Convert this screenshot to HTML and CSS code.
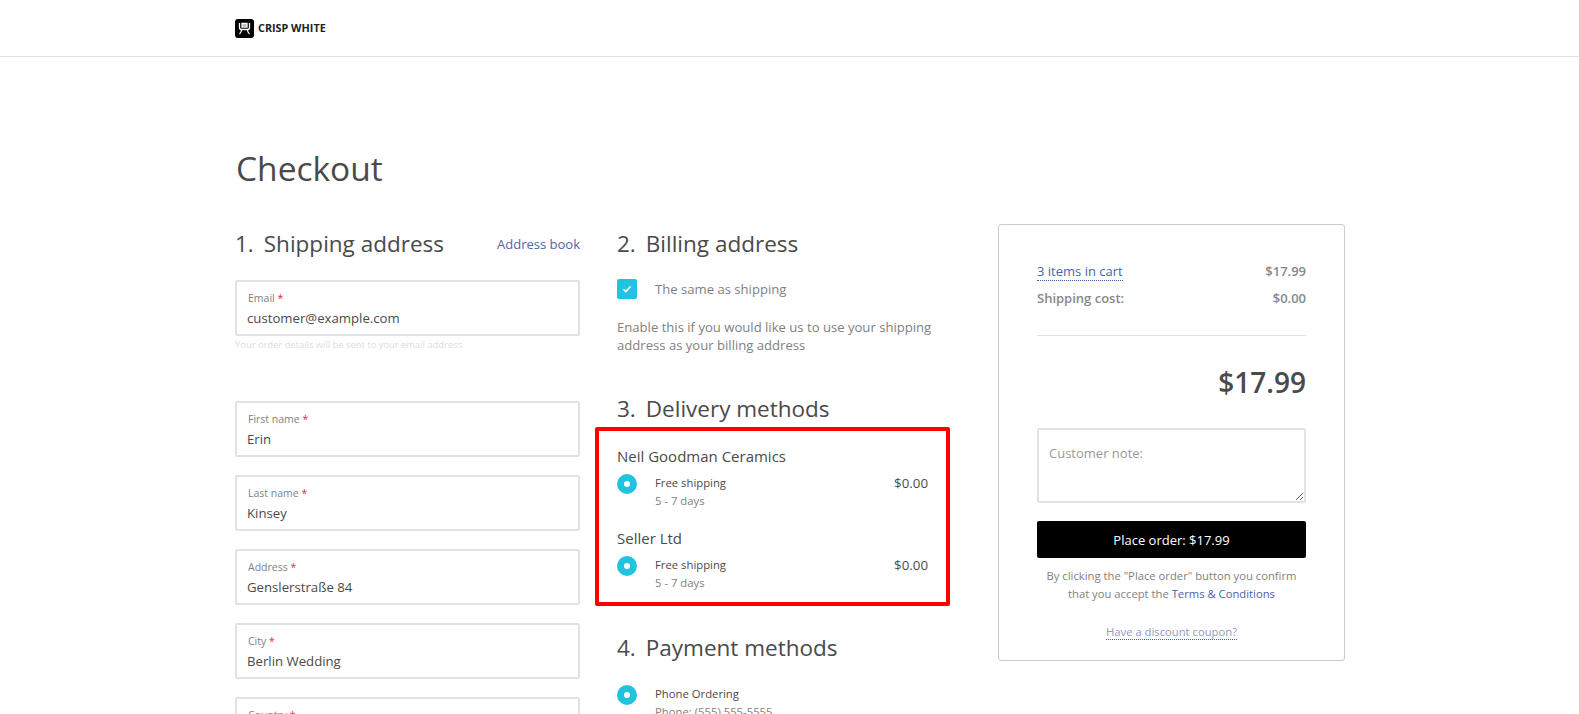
FILE: index.html
```html
<!DOCTYPE html>
<html lang="en">
<head>
  <meta charset="UTF-8">
  <title>Checkout</title>
  <link rel="stylesheet" href="styles.css">
</head>
<body>
  <header class="topbar">
    <a class="logo" href="#">
      <svg class="logo-mark" width="19" height="19" viewBox="0 0 19 19">
        <rect width="19" height="19" rx="3" fill="#000"/>
        <path d="M4.5 4v4.5q0 2 2 2h6q2 0 2-2V4M7 4.5h5v3.5H7zM7 6.2h5M6.5 10.5q0 3-2 4.5M12.500 10.500q0 3 2 4.500" fill="none" stroke="#fff" stroke-width="1.300"/>
      </svg>
      <span class="logo-text">CRISP WHITE</span>
    </a>
  </header>

  <main class="page">
    <h1>Checkout</h1>
    <div class="columns">
      <section class="col-left">
        <div class="section-head">
          <h2><span class="num">1.</span>Shipping address</h2>
          <a class="link" href="#">Address book</a>
        </div>

        <div class="field">
          <label for="email">Email <i>*</i></label>
          <input type="text" id="email" value="customer@example.com">
        </div>
        <p class="hint">Your order details will be sent to your email address</p>

        <div class="field">
          <label for="firstName">First name <i>*</i></label>
          <input type="text" id="firstName" value="Erin">
        </div>
        <div class="field">
          <label for="lastName">Last name <i>*</i></label>
          <input type="text" id="lastName" value="Kinsey">
        </div>
        <div class="field">
          <label for="address">Address <i>*</i></label>
          <input type="text" id="address" value="Genslerstraße 84">
        </div>
        <div class="field">
          <label for="city">City <i>*</i></label>
          <input type="text" id="city" value="Berlin Wedding">
        </div>
        <div class="field">
          <label for="country">Country <i>*</i></label>
          <input type="text" id="country" value="Germany">
        </div>
      </section>

      <section class="col-mid">
        <h2><span class="num">2.</span>Billing address</h2>
        <div class="same-row">
          <span class="checkbox">
            <svg width="10" height="10" viewBox="0 0 10 10"><path d="M1.5 5.2l2.3 2.3 4.7-5" fill="none" stroke="#fff" stroke-width="1.6"/></svg>
          </span>
          <span>The same as shipping</span>
        </div>
        <p class="note">Enable this if you would like us to use your shipping address as your billing address</p>

        <h2 class="delivery-title"><span class="num">3.</span>Delivery methods</h2>
        <div class="delivery-box">
          <div class="seller">
            <h3>Neil Goodman Ceramics</h3>
            <div class="method">
              <span class="radio"></span>
              <div class="method-text">
                <div class="method-name">Free shipping</div>
                <div class="method-sub">5 - 7 days</div>
              </div>
              <span class="method-price">$0.00</span>
            </div>
          </div>
          <div class="seller">
            <h3>Seller Ltd</h3>
            <div class="method">
              <span class="radio"></span>
              <div class="method-text">
                <div class="method-name">Free shipping</div>
                <div class="method-sub">5 - 7 days</div>
              </div>
              <span class="method-price">$0.00</span>
            </div>
          </div>
        </div>

        <h2 class="payment-title"><span class="num">4.</span>Payment methods</h2>
        <div class="method">
          <span class="radio"></span>
          <div class="method-text">
            <div class="method-name">Phone Ordering</div>
            <div class="method-sub">Phone: (555) 555-5555</div>
          </div>
        </div>
      </section>

      <aside class="summary">
        <div class="summary-row">
          <a class="link dotted" href="#">3 items in cart</a>
          <strong>$17.99</strong>
        </div>
        <div class="summary-row">
          <strong>Shipping cost:</strong>
          <strong>$0.00</strong>
        </div>
        <hr>
        <div class="total">$17.99</div>
        <textarea class="customer-note" placeholder="Customer note:"></textarea>
        <button type="button" class="place-order">Place order: $17.99</button>
        <p class="terms">By clicking the "Place order" button you confirm that you accept the <a href="#">Terms &amp; Conditions</a></p>
        <div class="coupon"><a class="dotted" href="#">Have a discount coupon?</a></div>
      </aside>
    </div>
  </main>
</body>
</html>
```

FILE: styles.css
```css
html, body {
  height: 714px;
  overflow: hidden;
}

body {
  margin: 0;
  background-color: #fff;
  font-family: "Open Sans", sans-serif;
  color: #4a4a4a;
}

a {
  text-decoration: none;
}

.topbar {
  height: 56px;
  border-bottom: 1px solid #e2e2e2;
  padding-left: 235px;
  display: flex;
  align-items: center;
}

.logo {
  display: flex;
  align-items: center;
  gap: 4px;
  color: #222;
  font-size: 10.8px;
  font-weight: 700;
}

.logo-text {
  padding-bottom: 2px;
}

.page {
  width: 1110px;
  margin-left: 235px;
}

h1 {
  margin: 88px 0 0;
  padding-left: 1px;
  font-size: 33.5px;
  line-height: 46px;
  font-weight: 400;
}

h2 {
  margin: 0;
  font-size: 22.5px;
  line-height: 32px;
  font-weight: 400;
}

.num {
  margin-right: 10px;
}

.columns {
  display: flex;
  align-items: flex-start;
  margin-top: 33px;
}

.col-left {
  width: 345px;
  margin-right: 37px;
}

.col-mid {
  width: 330px;
  margin-right: 51px;
  margin-top: 4px;
}

.section-head {
  display: flex;
  justify-content: space-between;
  align-items: center;
  margin-top: 4px;
  margin-bottom: 20px;
}

.link {
  color: #4a66a8;
  font-size: 13px;
}

.field {
  height: 56px;
  box-sizing: border-box;
  border: 2px solid #e2e2e2;
  border-radius: 2px;
  padding: 9px 10px 0;
  margin-bottom: 18px;
}

.field label {
  display: block;
  font-size: 10.500px;
  line-height: 15px;
  color: #7f7f7f;
  padding-left: 1px;
}

.field i {
  color: #f0243c;
  font-style: normal;
}

.field input {
  display: block;
  width: 100%;
  border: 0;
  outline: 0;
  padding: 0;
  margin-top: 1.500px;
  font-family: inherit;
  font-size: 13.200px;
  line-height: 20px;
  color: #4a4a4a;
}

.hint {
  margin: -16px 0 49px;
  font-size: 9.400px;
  line-height: 14px;
  color: #ddd;
}

.same-row {
  display: flex;
  align-items: center;
  margin-top: 19px;
  font-size: 13.100px;
  color: #7f7f7f;
}

.checkbox,
.radio {
  width: 20px;
  height: 20px;
  flex: none;
  margin-right: 18px;
  background-color: #22c3e0;
}

.checkbox {
  border-radius: 2px;
  display: flex;
  align-items: center;
  justify-content: center;
}

.radio {
  box-sizing: border-box;
  border-radius: 50%;
  border: 7px solid #22c3e0;
  background-color: #fff;
}

.note {
  margin: 19px 0 0;
  font-size: 13.100px;
  line-height: 18px;
  color: #7f7f7f;
}

.delivery-title {
  margin-top: 39px;
}

.delivery-box {
  box-sizing: border-box;
  width: 355px;
  margin: 2px 0 0 -22px;
  border: 4px solid #f00;
  border-radius: 2px;
  padding: 15px 18px 10px;
}

.seller h3 {
  margin: 0 0 8px;
  font-size: 15px;
  line-height: 20px;
  font-weight: 400;
}

.seller + .seller {
  margin-top: 18px;
}

.method {
  display: flex;
  align-items: flex-start;
}

.method-text {
  flex: 1;
  font-size: 11.300px;
  line-height: 18px;
}

.method-sub {
  color: #7f7f7f;
}

.method-price {
  font-size: 13.300px;
  line-height: 18px;
}

.payment-title {
  margin: 26px 0 21px;
}

.summary {
  box-sizing: border-box;
  width: 347px;
  height: 437px;
  border: 1px solid #ccc;
  border-radius: 3px;
  padding: 37px 38px 0;
}

.summary-row {
  display: flex;
  justify-content: space-between;
  align-items: flex-start;
  height: 27px;
  font-size: 13px;
  line-height: 18px;
}

.summary strong {
  font-size: 13px;
  font-weight: 600;
  color: #888;
}

.dotted {
  border-bottom: 1px dotted #3f5fae;
}

.summary hr {
  border: 0;
  border-top: 1px solid #e2e2e2;
  margin: 19px 0 0;
}

.total {
  margin-top: 25px;
  font-size: 28px;
  line-height: 42px;
  font-weight: 600;
  text-align: right;
}

.customer-note {
  display: block;
  box-sizing: border-box;
  width: 100%;
  height: 75px;
  margin-top: 25px;
  border: 2px solid #e2e2e2;
  border-radius: 2px;
  outline: 0;
  padding: 14px 10px;
  font-family: inherit;
  font-size: 13px;
  line-height: 18px;
}

.customer-note::placeholder {
  color: #999;
}

.place-order {
  display: block;
  width: 100%;
  height: 37px;
  margin-top: 18px;
  border: 0;
  border-radius: 2px;
  background-color: #000;
  color: #fff;
  font-family: inherit;
  font-size: 13px;
  font-weight: 500;
}

.terms {
  margin: 9px 0 0;
  font-size: 11.250px;
  line-height: 18px;
  color: #7f7f7f;
  text-align: center;
}

.terms a {
  color: #4a5fa0;
}

.coupon {
  margin-top: 21px;
  font-size: 11.250px;
  line-height: 16px;
  text-align: center;
}

.coupon a {
  color: #8d9cc2;
}
```
